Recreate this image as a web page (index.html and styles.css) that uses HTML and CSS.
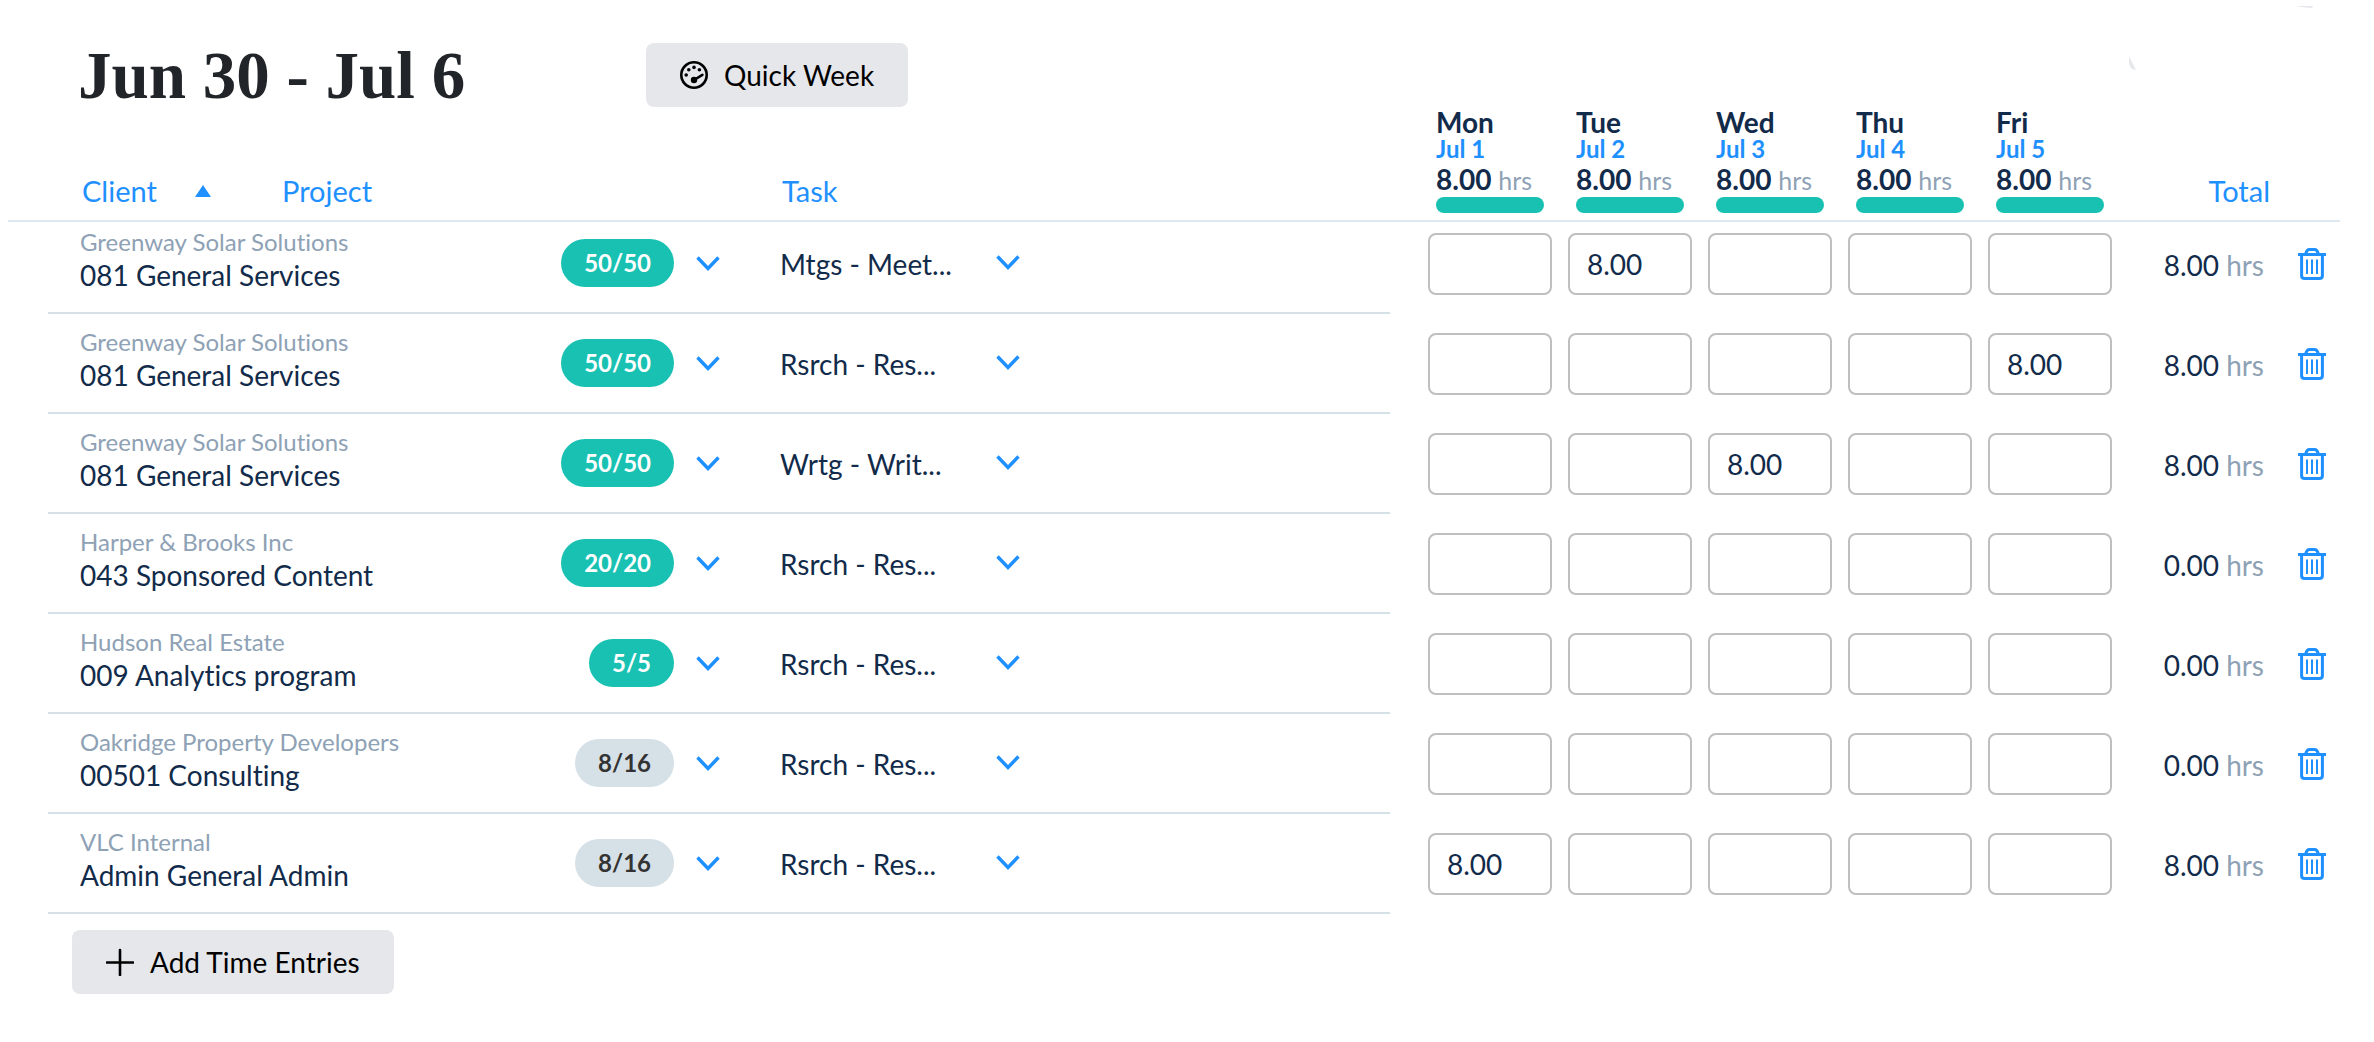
FILE: index.html
```html
<!DOCTYPE html>
<html lang="en">
<head>
    <meta charset="utf-8">
    <meta name="viewport" content="width=device-width, initial-scale=1">
    <title>Timesheet</title>
    <link rel="stylesheet" href="styles.css">
</head>
<body>
    <!-- Shared icons -->
    <svg class="sprite" aria-hidden="true">
        <symbol id="icon-chevron" viewBox="0 0 24 15">
            <path d="M1.5 1.5 L12 12.5 L22.5 1.5" fill="none" stroke="currentColor" stroke-width="3.4"/>
        </symbol>
        <symbol id="icon-trash" viewBox="0 0 28 32">
            <path d="M0 6.6H28M7.6 6.2C8.4 3 9.6 1.5 11.4 1.5H16.6C18.4 1.5 19.6 3 20.4 6.2M3.6 7V27.4Q3.6 30.5 6.8 30.5H21.2Q24.4 30.5 24.4 27.4V7" fill="none" stroke="currentColor" stroke-width="3"/>
            <path d="M9 11.5V26M14 11.5V26M19 11.5V26" fill="none" stroke="currentColor" stroke-width="2"/>
        </symbol>
    </svg>

    <header class="page-header">
        <h1>Jun 30 - Jul 6</h1>
        <button type="button" class="btn">
            <svg class="btn-icon" viewBox="0 0 28 28" aria-hidden="true">
                <circle cx="14" cy="14" r="12.7" fill="none" stroke="currentColor" stroke-width="2.6"/>
                <circle cx="6.2" cy="14" r="1.8"/>
                <circle cx="8.8" cy="8.8" r="1.8"/>
                <circle cx="14" cy="6.4" r="1.8"/>
                <circle cx="19.4" cy="8.8" r="1.8"/>
                <circle cx="14" cy="19" r="3.2"/>
                <path d="M14 19L22.4 13.8" stroke="currentColor" stroke-width="2.6" stroke-linecap="round"/>
            </svg>
            Quick Week
        </button>
        <svg class="header-marks" viewBox="0 0 184 64" aria-hidden="true">
            <path d="M166 0H184L183 2Q174 1.600 166 0Z"/>
            <path d="M0 50L7 64Q0 63 0 56Z"/>
        </svg>
    </header>

    <main>
        <table class="timesheet">
            <colgroup>
                <col class="col-edge">
                <col class="col-project">
                <col class="col-task">
                <col class="col-gap">
                <col class="col-day" span="5">
                <col class="col-total">
                <col class="col-action">
            </colgroup>
            <thead>
                <tr>
                    <td></td>
                    <th scope="col" class="label">
                        <div class="sorts">
                            <button type="button" class="sort sort-client">Client
                                <svg class="sort-arrow" viewBox="0 0 16 12" aria-hidden="true"><path d="M8 0L16 12H0Z"/></svg>
                            </button>
                            <button type="button" class="sort">Project</button>
                        </div>
                    </th>
                    <th scope="col" class="label"><button type="button" class="sort">Task</button></th>
                    <td></td>
                    <th scope="col" class="day">
                        <div class="day-name">Mon</div>
                        <div class="day-date">Jul 1</div>
                        <div class="day-hours">8.00 <span>hrs</span></div>
                        <div class="day-bar"></div>
                    </th>
                    <th scope="col" class="day">
                        <div class="day-name">Tue</div>
                        <div class="day-date">Jul 2</div>
                        <div class="day-hours">8.00 <span>hrs</span></div>
                        <div class="day-bar"></div>
                    </th>
                    <th scope="col" class="day">
                        <div class="day-name">Wed</div>
                        <div class="day-date">Jul 3</div>
                        <div class="day-hours">8.00 <span>hrs</span></div>
                        <div class="day-bar"></div>
                    </th>
                    <th scope="col" class="day">
                        <div class="day-name">Thu</div>
                        <div class="day-date">Jul 4</div>
                        <div class="day-hours">8.00 <span>hrs</span></div>
                        <div class="day-bar"></div>
                    </th>
                    <th scope="col" class="day">
                        <div class="day-name">Fri</div>
                        <div class="day-date">Jul 5</div>
                        <div class="day-hours">8.00 <span>hrs</span></div>
                        <div class="day-bar"></div>
                    </th>
                    <th scope="col" class="label label-total"><button type="button" class="sort">Total</button></th>
                    <td></td>
                </tr>
            </thead>
            <tbody>
                <tr>
                    <td></td>
                    <td class="project line">
                        <div class="project-row">
                            <div class="project-text">
                                <div class="client">Greenway Solar Solutions</div>
                                <div class="name">081 General Services</div>
                            </div>
                            <span class="pill full">50/50</span>
                            <button type="button" class="icon-btn" aria-label="Change project"><svg class="chevron"><use href="#icon-chevron"/></svg></button>
                        </div>
                    </td>
                    <td class="task line">
                        <div class="select-box">
                            <select aria-label="Task"><option>Mtgs - Meet...</option></select>
                            <svg class="chevron"><use href="#icon-chevron"/></svg>
                        </div>
                    </td>
                    <td></td>
                    <td class="entry"><input type="text" aria-label="Mon hours"></td>
                    <td class="entry"><input type="text" aria-label="Tue hours" value="8.00"></td>
                    <td class="entry"><input type="text" aria-label="Wed hours"></td>
                    <td class="entry"><input type="text" aria-label="Thu hours"></td>
                    <td class="entry"><input type="text" aria-label="Fri hours"></td>
                    <td class="total">8.00 <span>hrs</span></td>
                    <td class="action"><button type="button" class="icon-btn" aria-label="Delete row"><svg class="trash"><use href="#icon-trash"/></svg></button></td>
                </tr>
                <tr>
                    <td></td>
                    <td class="project line">
                        <div class="project-row">
                            <div class="project-text">
                                <div class="client">Greenway Solar Solutions</div>
                                <div class="name">081 General Services</div>
                            </div>
                            <span class="pill full">50/50</span>
                            <button type="button" class="icon-btn" aria-label="Change project"><svg class="chevron"><use href="#icon-chevron"/></svg></button>
                        </div>
                    </td>
                    <td class="task line">
                        <div class="select-box">
                            <select aria-label="Task"><option>Rsrch - Res...</option></select>
                            <svg class="chevron"><use href="#icon-chevron"/></svg>
                        </div>
                    </td>
                    <td></td>
                    <td class="entry"><input type="text" aria-label="Mon hours"></td>
                    <td class="entry"><input type="text" aria-label="Tue hours"></td>
                    <td class="entry"><input type="text" aria-label="Wed hours"></td>
                    <td class="entry"><input type="text" aria-label="Thu hours"></td>
                    <td class="entry"><input type="text" aria-label="Fri hours" value="8.00"></td>
                    <td class="total">8.00 <span>hrs</span></td>
                    <td class="action"><button type="button" class="icon-btn" aria-label="Delete row"><svg class="trash"><use href="#icon-trash"/></svg></button></td>
                </tr>
                <tr>
                    <td></td>
                    <td class="project line">
                        <div class="project-row">
                            <div class="project-text">
                                <div class="client">Greenway Solar Solutions</div>
                                <div class="name">081 General Services</div>
                            </div>
                            <span class="pill full">50/50</span>
                            <button type="button" class="icon-btn" aria-label="Change project"><svg class="chevron"><use href="#icon-chevron"/></svg></button>
                        </div>
                    </td>
                    <td class="task line">
                        <div class="select-box">
                            <select aria-label="Task"><option>Wrtg - Writ...</option></select>
                            <svg class="chevron"><use href="#icon-chevron"/></svg>
                        </div>
                    </td>
                    <td></td>
                    <td class="entry"><input type="text" aria-label="Mon hours"></td>
                    <td class="entry"><input type="text" aria-label="Tue hours"></td>
                    <td class="entry"><input type="text" aria-label="Wed hours" value="8.00"></td>
                    <td class="entry"><input type="text" aria-label="Thu hours"></td>
                    <td class="entry"><input type="text" aria-label="Fri hours"></td>
                    <td class="total">8.00 <span>hrs</span></td>
                    <td class="action"><button type="button" class="icon-btn" aria-label="Delete row"><svg class="trash"><use href="#icon-trash"/></svg></button></td>
                </tr>
                <tr>
                    <td></td>
                    <td class="project line">
                        <div class="project-row">
                            <div class="project-text">
                                <div class="client">Harper &amp; Brooks Inc</div>
                                <div class="name">043 Sponsored Content</div>
                            </div>
                            <span class="pill full">20/20</span>
                            <button type="button" class="icon-btn" aria-label="Change project"><svg class="chevron"><use href="#icon-chevron"/></svg></button>
                        </div>
                    </td>
                    <td class="task line">
                        <div class="select-box">
                            <select aria-label="Task"><option>Rsrch - Res...</option></select>
                            <svg class="chevron"><use href="#icon-chevron"/></svg>
                        </div>
                    </td>
                    <td></td>
                    <td class="entry"><input type="text" aria-label="Mon hours"></td>
                    <td class="entry"><input type="text" aria-label="Tue hours"></td>
                    <td class="entry"><input type="text" aria-label="Wed hours"></td>
                    <td class="entry"><input type="text" aria-label="Thu hours"></td>
                    <td class="entry"><input type="text" aria-label="Fri hours"></td>
                    <td class="total">0.00 <span>hrs</span></td>
                    <td class="action"><button type="button" class="icon-btn" aria-label="Delete row"><svg class="trash"><use href="#icon-trash"/></svg></button></td>
                </tr>
                <tr>
                    <td></td>
                    <td class="project line">
                        <div class="project-row">
                            <div class="project-text">
                                <div class="client">Hudson Real Estate</div>
                                <div class="name">009 Analytics program</div>
                            </div>
                            <span class="pill full">5/5</span>
                            <button type="button" class="icon-btn" aria-label="Change project"><svg class="chevron"><use href="#icon-chevron"/></svg></button>
                        </div>
                    </td>
                    <td class="task line">
                        <div class="select-box">
                            <select aria-label="Task"><option>Rsrch - Res...</option></select>
                            <svg class="chevron"><use href="#icon-chevron"/></svg>
                        </div>
                    </td>
                    <td></td>
                    <td class="entry"><input type="text" aria-label="Mon hours"></td>
                    <td class="entry"><input type="text" aria-label="Tue hours"></td>
                    <td class="entry"><input type="text" aria-label="Wed hours"></td>
                    <td class="entry"><input type="text" aria-label="Thu hours"></td>
                    <td class="entry"><input type="text" aria-label="Fri hours"></td>
                    <td class="total">0.00 <span>hrs</span></td>
                    <td class="action"><button type="button" class="icon-btn" aria-label="Delete row"><svg class="trash"><use href="#icon-trash"/></svg></button></td>
                </tr>
                <tr>
                    <td></td>
                    <td class="project line">
                        <div class="project-row">
                            <div class="project-text">
                                <div class="client">Oakridge Property Developers</div>
                                <div class="name">00501 Consulting</div>
                            </div>
                            <span class="pill">8/16</span>
                            <button type="button" class="icon-btn" aria-label="Change project"><svg class="chevron"><use href="#icon-chevron"/></svg></button>
                        </div>
                    </td>
                    <td class="task line">
                        <div class="select-box">
                            <select aria-label="Task"><option>Rsrch - Res...</option></select>
                            <svg class="chevron"><use href="#icon-chevron"/></svg>
                        </div>
                    </td>
                    <td></td>
                    <td class="entry"><input type="text" aria-label="Mon hours"></td>
                    <td class="entry"><input type="text" aria-label="Tue hours"></td>
                    <td class="entry"><input type="text" aria-label="Wed hours"></td>
                    <td class="entry"><input type="text" aria-label="Thu hours"></td>
                    <td class="entry"><input type="text" aria-label="Fri hours"></td>
                    <td class="total">0.00 <span>hrs</span></td>
                    <td class="action"><button type="button" class="icon-btn" aria-label="Delete row"><svg class="trash"><use href="#icon-trash"/></svg></button></td>
                </tr>
                <tr>
                    <td></td>
                    <td class="project line">
                        <div class="project-row">
                            <div class="project-text">
                                <div class="client">VLC Internal</div>
                                <div class="name">Admin General Admin</div>
                            </div>
                            <span class="pill">8/16</span>
                            <button type="button" class="icon-btn" aria-label="Change project"><svg class="chevron"><use href="#icon-chevron"/></svg></button>
                        </div>
                    </td>
                    <td class="task line">
                        <div class="select-box">
                            <select aria-label="Task"><option>Rsrch - Res...</option></select>
                            <svg class="chevron"><use href="#icon-chevron"/></svg>
                        </div>
                    </td>
                    <td></td>
                    <td class="entry"><input type="text" aria-label="Mon hours" value="8.00"></td>
                    <td class="entry"><input type="text" aria-label="Tue hours"></td>
                    <td class="entry"><input type="text" aria-label="Wed hours"></td>
                    <td class="entry"><input type="text" aria-label="Thu hours"></td>
                    <td class="entry"><input type="text" aria-label="Fri hours"></td>
                    <td class="total">8.00 <span>hrs</span></td>
                    <td class="action"><button type="button" class="icon-btn" aria-label="Delete row"><svg class="trash"><use href="#icon-trash"/></svg></button></td>
                </tr>
            </tbody>
        </table>

        <div class="footer">
            <button type="button" class="btn">
                <svg class="btn-icon" viewBox="0 0 28 28" aria-hidden="true">
                    <path d="M14 2V27M1 14.500H27" fill="none" stroke="currentColor" stroke-width="2.6" stroke-linecap="round"/>
                </svg>
                Add Time Entries
            </button>
        </div>
    </main>
</body>
</html>
```

FILE: styles.css
```css
* {
    box-sizing: border-box;
}

body {
    margin: 0;
    padding: 0 34px 0 8px;
    font-family: Lato, sans-serif;
    font-size: 28px;
    line-height: 34px;
    font-variant-ligatures: none;
    color: #122b4a;
    background: #fff;
}

button,
input,
select {
    font: inherit;
    color: inherit;
}

button {
    border: none;
    background: none;
    padding: 0;
    cursor: pointer;
}

svg {
    display: block;
}

.sprite {
    display: none;
}

/* Header */
.page-header {
    display: flex;
    align-items: center;
    height: 108px;
    padding-top: 42px;
    padding-left: 70px;
}

.page-header h1 {
    width: 568px;
    margin: 0;
    font-family: "Liberation Serif", serif;
    font-size: 67px;
    line-height: 64px;
    font-weight: 700;
    color: #212529;
}

.header-marks {
    align-self: flex-start;
    width: 184px;
    height: 64px;
    margin-top: -36px;
    margin-left: auto;
    margin-right: 27px;
    fill: #e6e7eb;
}

.btn {
    display: inline-flex;
    align-items: center;
    gap: 16px;
    height: 64px;
    padding: 0 34px;
    border-radius: 8px;
    background: #e6e7eb;
    color: #000;
}

.btn-icon {
    width: 28px;
    height: 28px;
}

/* Timesheet */
.timesheet {
    width: 100%;
    table-layout: fixed;
    border-collapse: separate;
    border-spacing: 0;
}

.col-edge { width: 40px; }
.col-project { width: 700px; }
.col-gap { width: 30px; }
.col-day { width: 140px; }
.col-total { width: 150px; }
.col-action { width: 70px; }

.timesheet th,
.timesheet td {
    padding: 0;
    text-align: left;
    vertical-align: bottom;
    font-weight: 400;
}

.timesheet thead th,
.timesheet thead td {
    border-bottom: 2px solid #dfe8ef;
}

.timesheet .label {
    padding-left: 34px;
    padding-bottom: 12px;
    font-size: 29px;
}

.timesheet .label-total {
    padding-left: 0;
    text-align: right;
}

.sorts {
    display: flex;
}

.sort {
    display: flex;
    align-items: center;
    color: #1e90ff;
}

.label-total .sort {
    margin-left: auto;
}

.sort-client {
    gap: 38px;
    width: 200px;
}

.sort-arrow {
    width: 16px;
    height: 12px;
    fill: #1e90ff;
}

.timesheet .day {
    padding: 0 16px 7px;
}

.day-name {
    font-weight: 700;
    line-height: 28px;
}

.day-date {
    font-size: 24px;
    line-height: 26px;
    font-weight: 700;
    color: #1e90ff;
}

.day-hours {
    font-weight: 700;
    line-height: 34px;
}

.day-hours span {
    font-size: 25px;
    font-weight: 400;
    color: #8ea1b5;
}

.day-bar {
    height: 16px;
    border-radius: 8px;
    background: #18c1b2;
}

/* Entries */
.timesheet tbody tr {
    height: 100px;
}

.timesheet tbody tr:first-child {
    height: 92px;
}

.timesheet .line {
    border-bottom: 2px solid #d6e0e7;
}

.timesheet .project {
    padding: 0 28px 12px 32px;
}

.project-row {
    display: flex;
    align-items: center;
}

.project-text {
    flex: 1;
    padding-bottom: 8px;
}

.client {
    font-size: 24px;
    line-height: 32px;
    color: #8ea1b5;
}

.pill {
    height: 48px;
    padding: 0 23px;
    border-radius: 24px;
    font-size: 24px;
    line-height: 48px;
    font-weight: 700;
    background: #d6e0e7;
    color: #333;
}

.pill.full {
    background: #18c1b2;
    color: #fff;
}

.icon-btn {
    display: block;
    color: #1e90ff;
}

.chevron {
    width: 24px;
    height: 15px;
    color: #1e90ff;
}

.project .icon-btn {
    margin-left: 22px;
}

.timesheet .task {
    padding-left: 32px;
    padding-bottom: 31px;
}

/* Select and its arrow share one grid cell */
.select-box {
    display: grid;
    align-items: center;
    width: 240px;
}

.select-box select {
    grid-area: 1 / 1;
    appearance: none;
    width: 100%;
    padding: 4px 0 0;
    border: none;
    background: none;
}

.select-box .chevron {
    grid-area: 1 / 1;
    justify-self: end;
    pointer-events: none;
}

.timesheet .entry {
    padding: 0 8px 19px;
}

.entry input {
    display: block;
    width: 100%;
    height: 62px;
    padding: 0 17px;
    border: 2px solid #bfbfbf;
    border-radius: 8px;
    background: #fff;
}

.timesheet .total {
    padding-right: 6px;
    padding-bottom: 32px;
    text-align: right;
}

.total span {
    color: #8ea1b5;
}

.timesheet .action {
    padding-left: 28px;
    padding-bottom: 34px;
}

.trash {
    width: 28px;
    height: 32px;
}

.footer {
    padding: 16px 0 48px 64px;
}
```
